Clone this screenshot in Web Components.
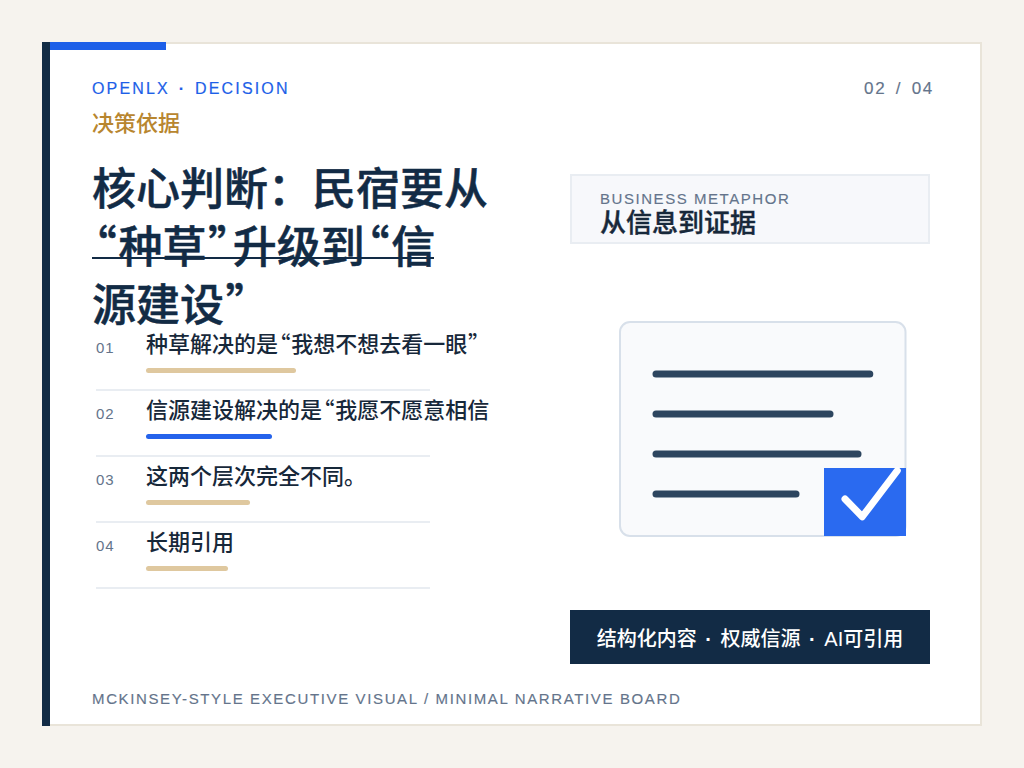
<!DOCTYPE html>
<html lang="zh-CN"><head><meta charset="utf-8"><title>决策依据</title>
<style>
html,body{margin:0;padding:0;background:#f6f3ee}
body{width:1024px;height:768px;overflow:hidden;font-family:"Liberation Sans","Noto Sans CJK SC",sans-serif;display:flex;align-items:flex-start;padding:42px;box-sizing:border-box}
</style></head><body>
<x-board>
  <x-header slot="head" sub="决策依据" page="02 / 04"></x-header>
  <div slot="left">
    <x-title lines="核心判断：民宿要从|“种草”升级到“信|源建设”"></x-title>
    <x-row num="01" bar="150" text="种草解决的是“我想不想去看一眼”"></x-row>
    <x-row num="02" bar="126" accent text="信源建设解决的是“我愿不愿意相信"></x-row>
    <x-row num="03" bar="104" text="这两个层次完全不同。"></x-row>
    <x-row num="04" bar="82" text="长期引用"></x-row>
  </div>
  <div slot="right">
    <x-metaphor en="BUSINESS METAPHOR" zh="从信息到证据"></x-metaphor>
    <x-doc></x-doc>
    <x-band>结构化内容 <b>·</b> 权威信源 <b>·</b> AI可引用</x-band>
  </div>
  <x-foot slot="foot">MCKINSEY-STYLE EXECUTIVE VISUAL / MINIMAL NARRATIVE BOARD</x-foot>
</x-board>
<script>
const quotes=s=>s.replace(/[“”]/g,m=>`<span class="q">${m}</span>`);
const QCSS=`.q{display:inline-block;width:.6em;line-height:1;text-align:center;font-family:"Noto Sans CJK SC",sans-serif;font-feature-settings:"palt"}`;
const def=(name,css,html)=>{
  customElements.define(name,class extends HTMLElement{
    connectedCallback(){
      const r=this.attachShadow({mode:'open'});
      r.innerHTML='<style>'+css+'</style>'+(typeof html==='function'?html(this):html);
    }
  });
};
def('x-board',`
:host{display:flex;flex-direction:column;position:relative;box-sizing:border-box;width:940px;height:684px;background:#fff;border:2px solid #e9e4d9;padding:34px 48px 15px 48px}
.rail{position:absolute;left:-2px;top:-2px;bottom:-2px;width:8px;background:#122b45}
.tab{position:absolute;left:6px;top:-2px;width:116px;height:8px;background:#1d5fe8}
.main{display:grid;grid-template-columns:478px 360px;flex:1;min-height:0}
`,`<div class="rail"></div><div class="tab"></div><slot name="head"></slot><div class="main"><slot name="left"></slot><slot name="right"></slot></div><slot name="foot"></slot>`);
def('x-header',`
:host{display:flex;justify-content:space-between;align-items:flex-start;height:82px}
.k{font-size:16px;line-height:22px;letter-spacing:2.15px;word-spacing:2.300px;color:#1d5fe8;white-space:pre;-webkit-text-stroke:.2px currentColor}
.k b{font-weight:700}
.s{font-size:22px;line-height:28px;margin-top:10px;color:#b8862f;font-weight:500}
.p{font-size:17px;line-height:22px;letter-spacing:1.700px;word-spacing:3px;color:#64748b;margin-right:-2px;-webkit-text-stroke:.15px currentColor}
`,h=>`<div><div class="k">OPENLX <b>·</b> DECISION</div><div class="s">${h.getAttribute('sub')}</div></div><div class="p">${h.getAttribute('page')}</div>`);
def('x-title',`
:host{display:block;position:relative;width:400px;height:165px;font-size:44px;line-height:58px;font-weight:500;color:#122b45;-webkit-text-stroke:.5px currentColor}
.t{height:174px;margin-top:1px;white-space:nowrap;position:absolute;top:0;left:0}
.rule{position:absolute;left:0;top:97px;width:342px;height:2px;background:#122b45}
`+QCSS,h=>`<div class="t">${h.getAttribute('lines').split('|').map(quotes).join('<br>')}</div><div class="rule"></div>`);
def('x-row',`
:host{display:grid;grid-template-columns:50px 1fr;box-sizing:border-box;width:334px;height:66px;margin-left:4px;border-bottom:2px solid #e9edf2;padding-top:6px}
.n{font-size:15px;line-height:34px;color:#64748b;letter-spacing:.8px}
.t{font-size:22px;line-height:28px;font-weight:500;color:#17283a;white-space:nowrap}
.b{height:5px;border-radius:3px;margin-top:9px;background:#dfc89f}
:host([accent]) .b{background:#2563eb}
`+QCSS,h=>`<div class="n">${h.getAttribute('num')}</div><div><div class="t">${quotes(h.getAttribute('text'))}</div><div class="b" style="width:${h.getAttribute('bar')}px"></div></div>`);
def('x-metaphor',`
:host{display:block;box-sizing:border-box;width:360px;height:70px;margin-top:14px;background:#f7f8fb;border:2px solid #e9edf2;padding:14px 28px 0}
.e{font-size:15px;line-height:18px;letter-spacing:1.55px;color:#64748b;-webkit-text-stroke:.15px currentColor}
.z{font-size:26px;line-height:30px;font-weight:500;color:#17283a;-webkit-text-stroke:.4px currentColor}
`,h=>`<div class="e">${h.getAttribute('en')}</div><div class="z">${h.getAttribute('zh')}</div>`);
def('x-doc',`
:host{display:block;height:216px;margin:77px 0 73px 49px}
svg{display:block}
`,`<svg width="288" height="216" viewBox="0 0 288 216" fill="none" stroke-linecap="round" stroke-linejoin="round">
<rect x="1" y="1" width="285.500" height="214" rx="10" fill="#f9fafc" stroke="#d8e0ea" stroke-width="2"/>
<g stroke="#2d455f" stroke-width="7">
<path d="M37 53H250.800"/><path d="M37 93H211"/><path d="M37 133H239"/><path d="M37 173H177"/></g>
<rect x="205" y="147" width="82" height="68" fill="#2a6af0"/>
<path d="M226 178L243.300 195.700L278.300 149.700" stroke="#fff" stroke-width="7"/>
</svg>`);
def('x-band',`
:host{display:flex;align-items:center;justify-content:center;width:360px;height:54px;background:#122b45;color:#fff;font-size:20px;font-weight:500;white-space:pre;word-spacing:3px}
`,`<span><slot></slot></span>`);
def('x-foot',`
:host{display:block;font-size:15px;line-height:20px;letter-spacing:1.630px;color:#64748b;-webkit-text-stroke:.15px currentColor}
`,`<slot></slot>`);
</script>
</body></html>
